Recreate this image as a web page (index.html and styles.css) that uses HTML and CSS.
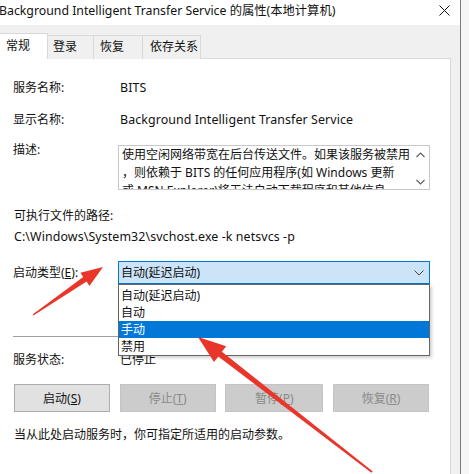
FILE: index.html
```html
<!DOCTYPE html>
<html lang="zh-CN">
<head>
<meta charset="utf-8">
<title>BITS 属性</title>
<link rel="stylesheet" href="styles.css">
</head>
<body>
<div class="screen">
  <div class="window">
    <div class="titlebar">
      <span class="title">Background Intelligent Transfer Service 的属性(本地计算机)</span>
      <svg class="close" width="11" height="11" viewBox="0 0 11 11"><path d="M0.5 0.5 L10.5 10.5 M10.5 0.5 L0.5 10.5" stroke="#111" stroke-width="1" fill="none"/></svg>
    </div>
    <div class="client">
      <div class="tabs">
        <div class="tab active">常规</div>
        <div class="tab t2">登录</div>
        <div class="tab t3">恢复</div>
        <div class="tab t4">依存关系</div>
      </div>
      <div class="panel">
        <div class="row r-name"><span class="label">服务名称:</span><span class="value latin">BITS</span></div>
        <div class="row r-display"><span class="label">显示名称:</span><span class="value latin">Background Intelligent Transfer Service</span></div>
        <div class="row r-desc">
          <span class="label">描述:</span>
          <div class="descbox">
            <div class="desctext">使用空闲网络带宽在后台传送文件。如果该服务被禁用<br>，则依赖于 BITS 的任何应用程序(如 Windows 更新<br>或 MSN Explorer)将无法自动下载程序和其他信息。</div>
            <div class="vscroll">
              <svg width="9" height="6" viewBox="0 0 9 6"><path d="M0.5 5 L4.5 1 L8.5 5" stroke="#606060" stroke-width="1.2" fill="none"/></svg>
              <svg width="9" height="6" viewBox="0 0 9 6"><path d="M0.5 1 L4.5 5 L8.5 1" stroke="#606060" stroke-width="1.2" fill="none"/></svg>
            </div>
          </div>
        </div>
        <div class="line r-pathlabel">可执行文件的路径:</div>
        <div class="line r-path latin">C:\Windows\System32\svchost.exe -k netsvcs -p</div>
        <div class="row r-start">
          <span class="label">启动类型(<u>E</u>):</span>
          <div class="combo">
            <div class="combo-field">
              <span>自动(延迟启动)</span>
              <svg width="10" height="6" viewBox="0 0 10 6"><path d="M0.5 0.5 L5 5 L9.5 0.5" stroke="#444" stroke-width="1" fill="none"/></svg>
            </div>
            <ul class="combo-list">
              <li>自动(延迟启动)</li>
              <li>自动</li>
              <li class="selected">手动</li>
              <li>禁用</li>
            </ul>
          </div>
        </div>
        <div class="separator"></div>
        <div class="row r-status"><span class="label">服务状态:</span><span class="value">已停止</span></div>
        <div class="buttons">
          <button class="btn">启动(<u>S</u>)</button>
          <button class="btn" disabled>停止(<u>T</u>)</button>
          <button class="btn wide" disabled>暂停(<u>P</u>)</button>
          <button class="btn" disabled>恢复(<u>R</u>)</button>
        </div>
        <div class="line r-hint">当从此处启动服务时，你可指定所适用的启动参数。</div>
      </div>
    </div>
  </div>
  <svg class="arrows" width="469" height="474" viewBox="0 0 469 474">
    <polygon fill="#e8362b" points="32.6,314.4 83.2,277.0 80.4,272.8 103,267 89.4,286.0 86.6,281.6 33.4,315.6"/>
    <polygon fill="#e8362b" points="372.6,471.2 221.9,351.8 226.2,346.3 198,337 214.0,362.1 218.3,356.6 371.4,472.8"/>
  </svg>
</div>
</body>
</html>
```

FILE: styles.css
```css
* { box-sizing: border-box; }

html, body {
  margin: 0;
  padding: 0;
}

body {
  width: 469px;
  height: 474px;
  overflow: hidden;
  background: #f6f6f6;
  font-family: "Noto Sans", "Noto Sans CJK SC", sans-serif;
  font-size: 12px;
  color: #111;
}

.screen {
  position: relative;
  width: 469px;
  height: 474px;
  display: flex;
}

.window {
  width: 461px;
  height: 474px;
  border-right: 1px solid #7d7d7d;
  background: #f0f0f0;
  display: flex;
  flex-direction: column;
}

.titlebar {
  height: 25px;
  flex: none;
  background: #fff;
  display: flex;
  align-items: flex-start;
  justify-content: space-between;
  padding: 3px 10px 0 0;
}

.title {
  line-height: 16px;
  font-size: 12.3px;
  margin-left: -1px;
  white-space: nowrap;
}

.close {
  margin-top: 2px;
}

.client {
  flex: 1;
  display: flex;
  flex-direction: column;
  padding: 8px 9px 0 0;
}

.tabs {
  display: flex;
  align-items: flex-end;
  height: 26px;
  position: relative;
  z-index: 1;
  margin-bottom: -1px;
}

.tab {
  height: 24px;
  border: 1px solid #d9d9d9;
  border-bottom: none;
  border-left: none;
  background: #f0f0f0;
  line-height: 22px;
  padding-left: 6px;
  white-space: nowrap;
}

.tab.active {
  width: 48px;
  height: 26px;
  background: #fff;
  border-color: #d9d9d9;
  line-height: 24px;
  padding-left: 6px;
}

.tab.t2 { width: 46px; padding-left: 5px; }
.tab.t3 { width: 49px; padding-left: 6px; }
.tab.t4 { width: 58px; padding-left: 7px; }

.panel {
  flex: 1;
  background: #fff;
  border-top: 1px solid #d9d9d9;
  border-right: 1px solid #d9d9d9;
  padding: 19px 0 0 13px;
  display: flex;
  flex-direction: column;
}

.row {
  display: grid;
  grid-template-columns: 105px 312px;
  line-height: 20px;
}

.label, .value, .line {
  white-space: nowrap;
}

.value {
  padding-left: 2px;
}

.latin {
  font-size: 12.4px;
  letter-spacing: 0.1px;
}

.line {
  line-height: 20px;
  padding-left: 1px;
}

.r-display { margin-top: 12px; }

.r-desc {
  margin-top: 10px;
  align-items: start;
}

.descbox {
  margin-top: 5px;
  height: 45px;
  border: 1px solid #c8c8c8;
  display: flex;
  overflow: hidden;
}

.desctext {
  flex: 1;
  padding: 0 0 0 3px;
  line-height: 18px;
  white-space: nowrap;
  overflow: hidden;
}

.vscroll {
  width: 18px;
  flex: none;
  display: flex;
  flex-direction: column;
  justify-content: space-between;
  align-items: center;
  padding: 6px 0 4px;
}

.r-pathlabel { margin-top: 16px; }
.r-path { margin-top: 1px; letter-spacing: 0.1px; }

.r-start {
  margin-top: 14px;
  align-items: center;
}

.combo {
  position: relative;
  height: 23px;
}

.combo-field {
  height: 23px;
  background: #cce4f7;
  border: 1px solid #0078d7;
  display: flex;
  align-items: center;
  justify-content: space-between;
  padding: 0 5px 0 2px;
}

.combo-list {
  position: absolute;
  left: 0;
  top: 23px;
  width: 312px;
  margin: 0;
  padding: 2px 0 0;
  list-style: none;
  background: #fff;
  border: 1px solid #646464;
  box-shadow: 2px 2px 3px rgba(0, 0, 0, 0.18);
  z-index: 2;
}

.combo-list li {
  height: 17px;
  line-height: 17px;
  padding-left: 2px;
}

.combo-list li.selected {
  background: #0078d7;
  color: #fff;
}

.separator {
  margin-top: 52px;
  height: 1px;
  width: 417px;
  background: #a0a0a0;
}

.r-status { margin-top: 13px; }

.buttons {
  margin-top: 14px;
  width: 416px;
  display: flex;
  justify-content: space-between;
  padding-left: 1px;
}

.btn {
  width: 96px;
  height: 28px;
  font: inherit;
  color: #111;
  background: #e1e1e1;
  border: 1px solid #adadad;
  padding: 0;
}

.btn.wide { width: 98px; }

.btn:disabled {
  background: #cccccc;
  border-color: #c4c4c4;
  color: #8a8a8a;
}

.r-hint { margin-top: 13px; }

.arrows {
  position: absolute;
  left: 0;
  top: 0;
  pointer-events: none;
  z-index: 5;
}
```
